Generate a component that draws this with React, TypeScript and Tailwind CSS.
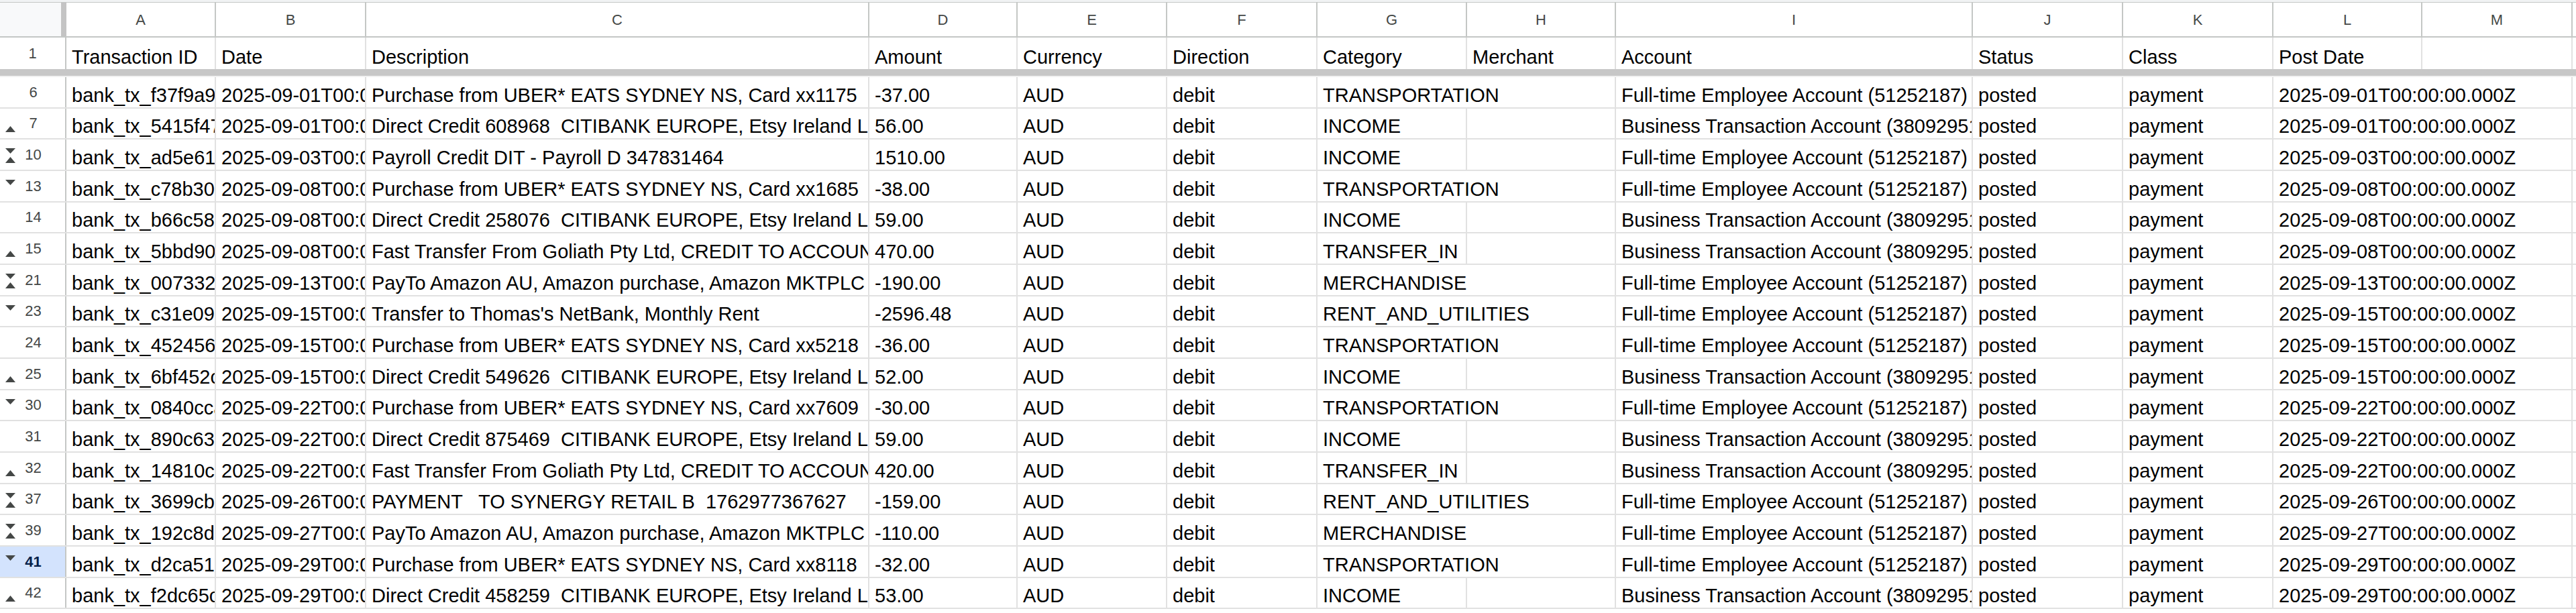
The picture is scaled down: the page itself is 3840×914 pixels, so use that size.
import React from "react";

type Arrow = "none" | "up" | "down" | "both";

type Tx = {
  row: number;
  arrow: Arrow;
  id: string;
  date: string;
  desc: string;
  amount: string;
  category: string;
  account: "F" | "B";
};

const columns = [
  { letter: "A", w: "w-[223px]" },
  { letter: "B", w: "w-[224px]" },
  { letter: "C", w: "w-[750px]" },
  { letter: "D", w: "w-[221px]" },
  { letter: "E", w: "w-[223px]" },
  { letter: "F", w: "w-[224px]" },
  { letter: "G", w: "w-[223px]" },
  { letter: "H", w: "w-[222px]" },
  { letter: "I", w: "w-[532px]" },
  { letter: "J", w: "w-[224px]" },
  { letter: "K", w: "w-[224px]" },
  { letter: "L", w: "w-[222px]" },
  { letter: "M", w: "w-[224px]" },
];

const headers = [
  "Transaction ID",
  "Date",
  "Description",
  "Amount",
  "Currency",
  "Direction",
  "Category",
  "Merchant",
  "Account",
  "Status",
  "Class",
  "Post Date",
  "",
];

const accounts = {
  F: "Full-time Employee Account (51252187)",
  B: "Business Transaction Account (38092951)",
};

const txs: Tx[] = [
  { row: 6, arrow: "none", id: "bank_tx_f37f9a9", date: "2025-09-01", desc: "Purchase from UBER* EATS SYDNEY NS, Card xx1175", amount: "-37.00", category: "TRANSPORTATION", account: "F" },
  { row: 7, arrow: "up", id: "bank_tx_5415f47e0b", date: "2025-09-01", desc: "Direct Credit 608968  CITIBANK EUROPE, Etsy Ireland Limited", amount: "56.00", category: "INCOME", account: "B" },
  { row: 10, arrow: "both", id: "bank_tx_ad5e61", date: "2025-09-03", desc: "Payroll Credit DIT - Payroll D 347831464", amount: "1510.00", category: "INCOME", account: "F" },
  { row: 13, arrow: "down", id: "bank_tx_c78b30", date: "2025-09-08", desc: "Purchase from UBER* EATS SYDNEY NS, Card xx1685", amount: "-38.00", category: "TRANSPORTATION", account: "F" },
  { row: 14, arrow: "none", id: "bank_tx_b66c58", date: "2025-09-08", desc: "Direct Credit 258076  CITIBANK EUROPE, Etsy Ireland Limited", amount: "59.00", category: "INCOME", account: "B" },
  { row: 15, arrow: "up", id: "bank_tx_5bbd90", date: "2025-09-08", desc: "Fast Transfer From Goliath Pty Ltd, CREDIT TO ACCOUNT", amount: "470.00", category: "TRANSFER_IN", account: "B" },
  { row: 21, arrow: "both", id: "bank_tx_007332", date: "2025-09-13", desc: "PayTo Amazon AU, Amazon purchase, Amazon MKTPLC", amount: "-190.00", category: "MERCHANDISE", account: "F" },
  { row: 23, arrow: "down", id: "bank_tx_c31e09", date: "2025-09-15", desc: "Transfer to Thomas's NetBank, Monthly Rent", amount: "-2596.48", category: "RENT_AND_UTILITIES", account: "F" },
  { row: 24, arrow: "none", id: "bank_tx_452456", date: "2025-09-15", desc: "Purchase from UBER* EATS SYDNEY NS, Card xx5218", amount: "-36.00", category: "TRANSPORTATION", account: "F" },
  { row: 25, arrow: "up", id: "bank_tx_6bf452c1", date: "2025-09-15", desc: "Direct Credit 549626  CITIBANK EUROPE, Etsy Ireland Limited", amount: "52.00", category: "INCOME", account: "B" },
  { row: 30, arrow: "down", id: "bank_tx_0840cca", date: "2025-09-22", desc: "Purchase from UBER* EATS SYDNEY NS, Card xx7609", amount: "-30.00", category: "TRANSPORTATION", account: "F" },
  { row: 31, arrow: "none", id: "bank_tx_890c63", date: "2025-09-22", desc: "Direct Credit 875469  CITIBANK EUROPE, Etsy Ireland Limited", amount: "59.00", category: "INCOME", account: "B" },
  { row: 32, arrow: "up", id: "bank_tx_14810c", date: "2025-09-22", desc: "Fast Transfer From Goliath Pty Ltd, CREDIT TO ACCOUNT", amount: "420.00", category: "TRANSFER_IN", account: "B" },
  { row: 37, arrow: "both", id: "bank_tx_3699cb", date: "2025-09-26", desc: "PAYMENT   TO SYNERGY RETAIL B  1762977367627", amount: "-159.00", category: "RENT_AND_UTILITIES", account: "F" },
  { row: 39, arrow: "both", id: "bank_tx_192c8d", date: "2025-09-27", desc: "PayTo Amazon AU, Amazon purchase, Amazon MKTPLC", amount: "-110.00", category: "MERCHANDISE", account: "F" },
  { row: 41, arrow: "down", id: "bank_tx_d2ca51", date: "2025-09-29", desc: "Purchase from UBER* EATS SYDNEY NS, Card xx8118", amount: "-32.00", category: "TRANSPORTATION", account: "F" },
  { row: 42, arrow: "up", id: "bank_tx_f2dc65c9", date: "2025-09-29", desc: "Direct Credit 458259  CITIBANK EUROPE, Etsy Ireland Limited", amount: "53.00", category: "INCOME", account: "B" },
];

const Up = () => (
  <svg width="15" height="9" viewBox="0 0 15 9" className="absolute left-[8px] top-[26px]">
    <polygon points="7.5,0 15,9 0,9" fill="#444746" />
  </svg>
);

const Down = () => (
  <svg width="15" height="8" viewBox="0 0 15 8" className="absolute left-[8px] top-[13px]">
    <polygon points="0,0 15,0 7.5,8" fill="#444746" />
  </svg>
);

function Cell({ w, text, spill, grid = "border-[#e1e1e1]" }: { w: string; text: string; spill?: boolean; grid?: string }) {
  return (
    <div
      className={`${w} shrink-0 h-full flex items-end pl-[8px] pb-[2px] border-r-2 whitespace-pre leading-[32px] ${
        spill ? "border-r-transparent overflow-visible" : `${grid} overflow-hidden`
      }`}
    >
      {text}
    </div>
  );
}

function DataRow({ tx }: { tx: Tx }) {
  const selected = tx.row === 41;
  const stamp = `${tx.date}T00:00:00.000Z`;
  const spillCat = tx.category !== "INCOME" && tx.category !== "TRANSFER_IN";
  const values = [
    tx.id,
    stamp,
    tx.desc,
    tx.amount,
    "AUD",
    "debit",
    tx.category,
    "",
    accounts[tx.account],
    "posted",
    "payment",
    stamp,
    "",
  ];
  return (
    <div className="flex h-[46.67px] shrink-0 border-b-2 border-[#e1e1e1]">
      <div
        className={`relative w-[99px] shrink-0 h-full border-r-2 border-r-[#c4c7c5] flex items-center justify-center text-[22px] ${
          selected ? "bg-[#d3e3fd] text-[#041e49] font-bold" : "text-[#444746]"
        }`}
      >
        {(tx.arrow === "down" || tx.arrow === "both") && <Down />}
        {(tx.arrow === "up" || tx.arrow === "both") && <Up />}
        <span className="pl-[2px]">{tx.row}</span>
      </div>
      {columns.map((c, i) => (
        <Cell key={c.letter} w={c.w} text={values[i]} spill={(i === 6 && spillCat) || i === 11} />
      ))}
      <div className="flex-1 h-full" />
    </div>
  );
}

export default function App() {
  return (
    <div className="w-[3840px] h-[914px] overflow-hidden bg-white text-black text-[29px] font-['Liberation_Sans',Arial,sans-serif] flex flex-col">
      <div className="h-[4px] shrink-0 bg-[#f1f3f4] border-b border-[#c4c7c5]" />

      {/* column letters */}
      <div className="flex h-[52px] shrink-0 border-b-2 border-[#c4c7c5] text-[22px] text-[#444746]">
        <div className="w-[99px] shrink-0 h-full bg-[#f8f9fa] border-r-[8px] border-[#c4c4c4]" />
        {columns.map((c) => (
          <div key={c.letter} className={`${c.w} shrink-0 h-full flex items-center justify-center border-r-2 border-[#c4c7c5]`}>
            {c.letter}
          </div>
        ))}
        <div className="flex-1" />
      </div>

      {/* header row 1 */}
      <div className="flex h-[47px] shrink-0">
        <div className="w-[99px] shrink-0 h-full border-r-2 border-[#c4c7c5] flex items-center justify-center text-[22px] text-[#444746]">
          1
        </div>
        {columns.map((c, i) => (
          <Cell key={c.letter} w={c.w} text={headers[i]} />
        ))}
        <div className="flex-1" />
      </div>

      {/* frozen row divider */}
      <div className="h-[10px] shrink-0 bg-[#c7c7c7]" />
      <div className="h-[2px] shrink-0 bg-[#f1f1f1]" />

      {txs.map((tx) => (
        <DataRow key={tx.row} tx={tx} />
      ))}
    </div>
  );
}
